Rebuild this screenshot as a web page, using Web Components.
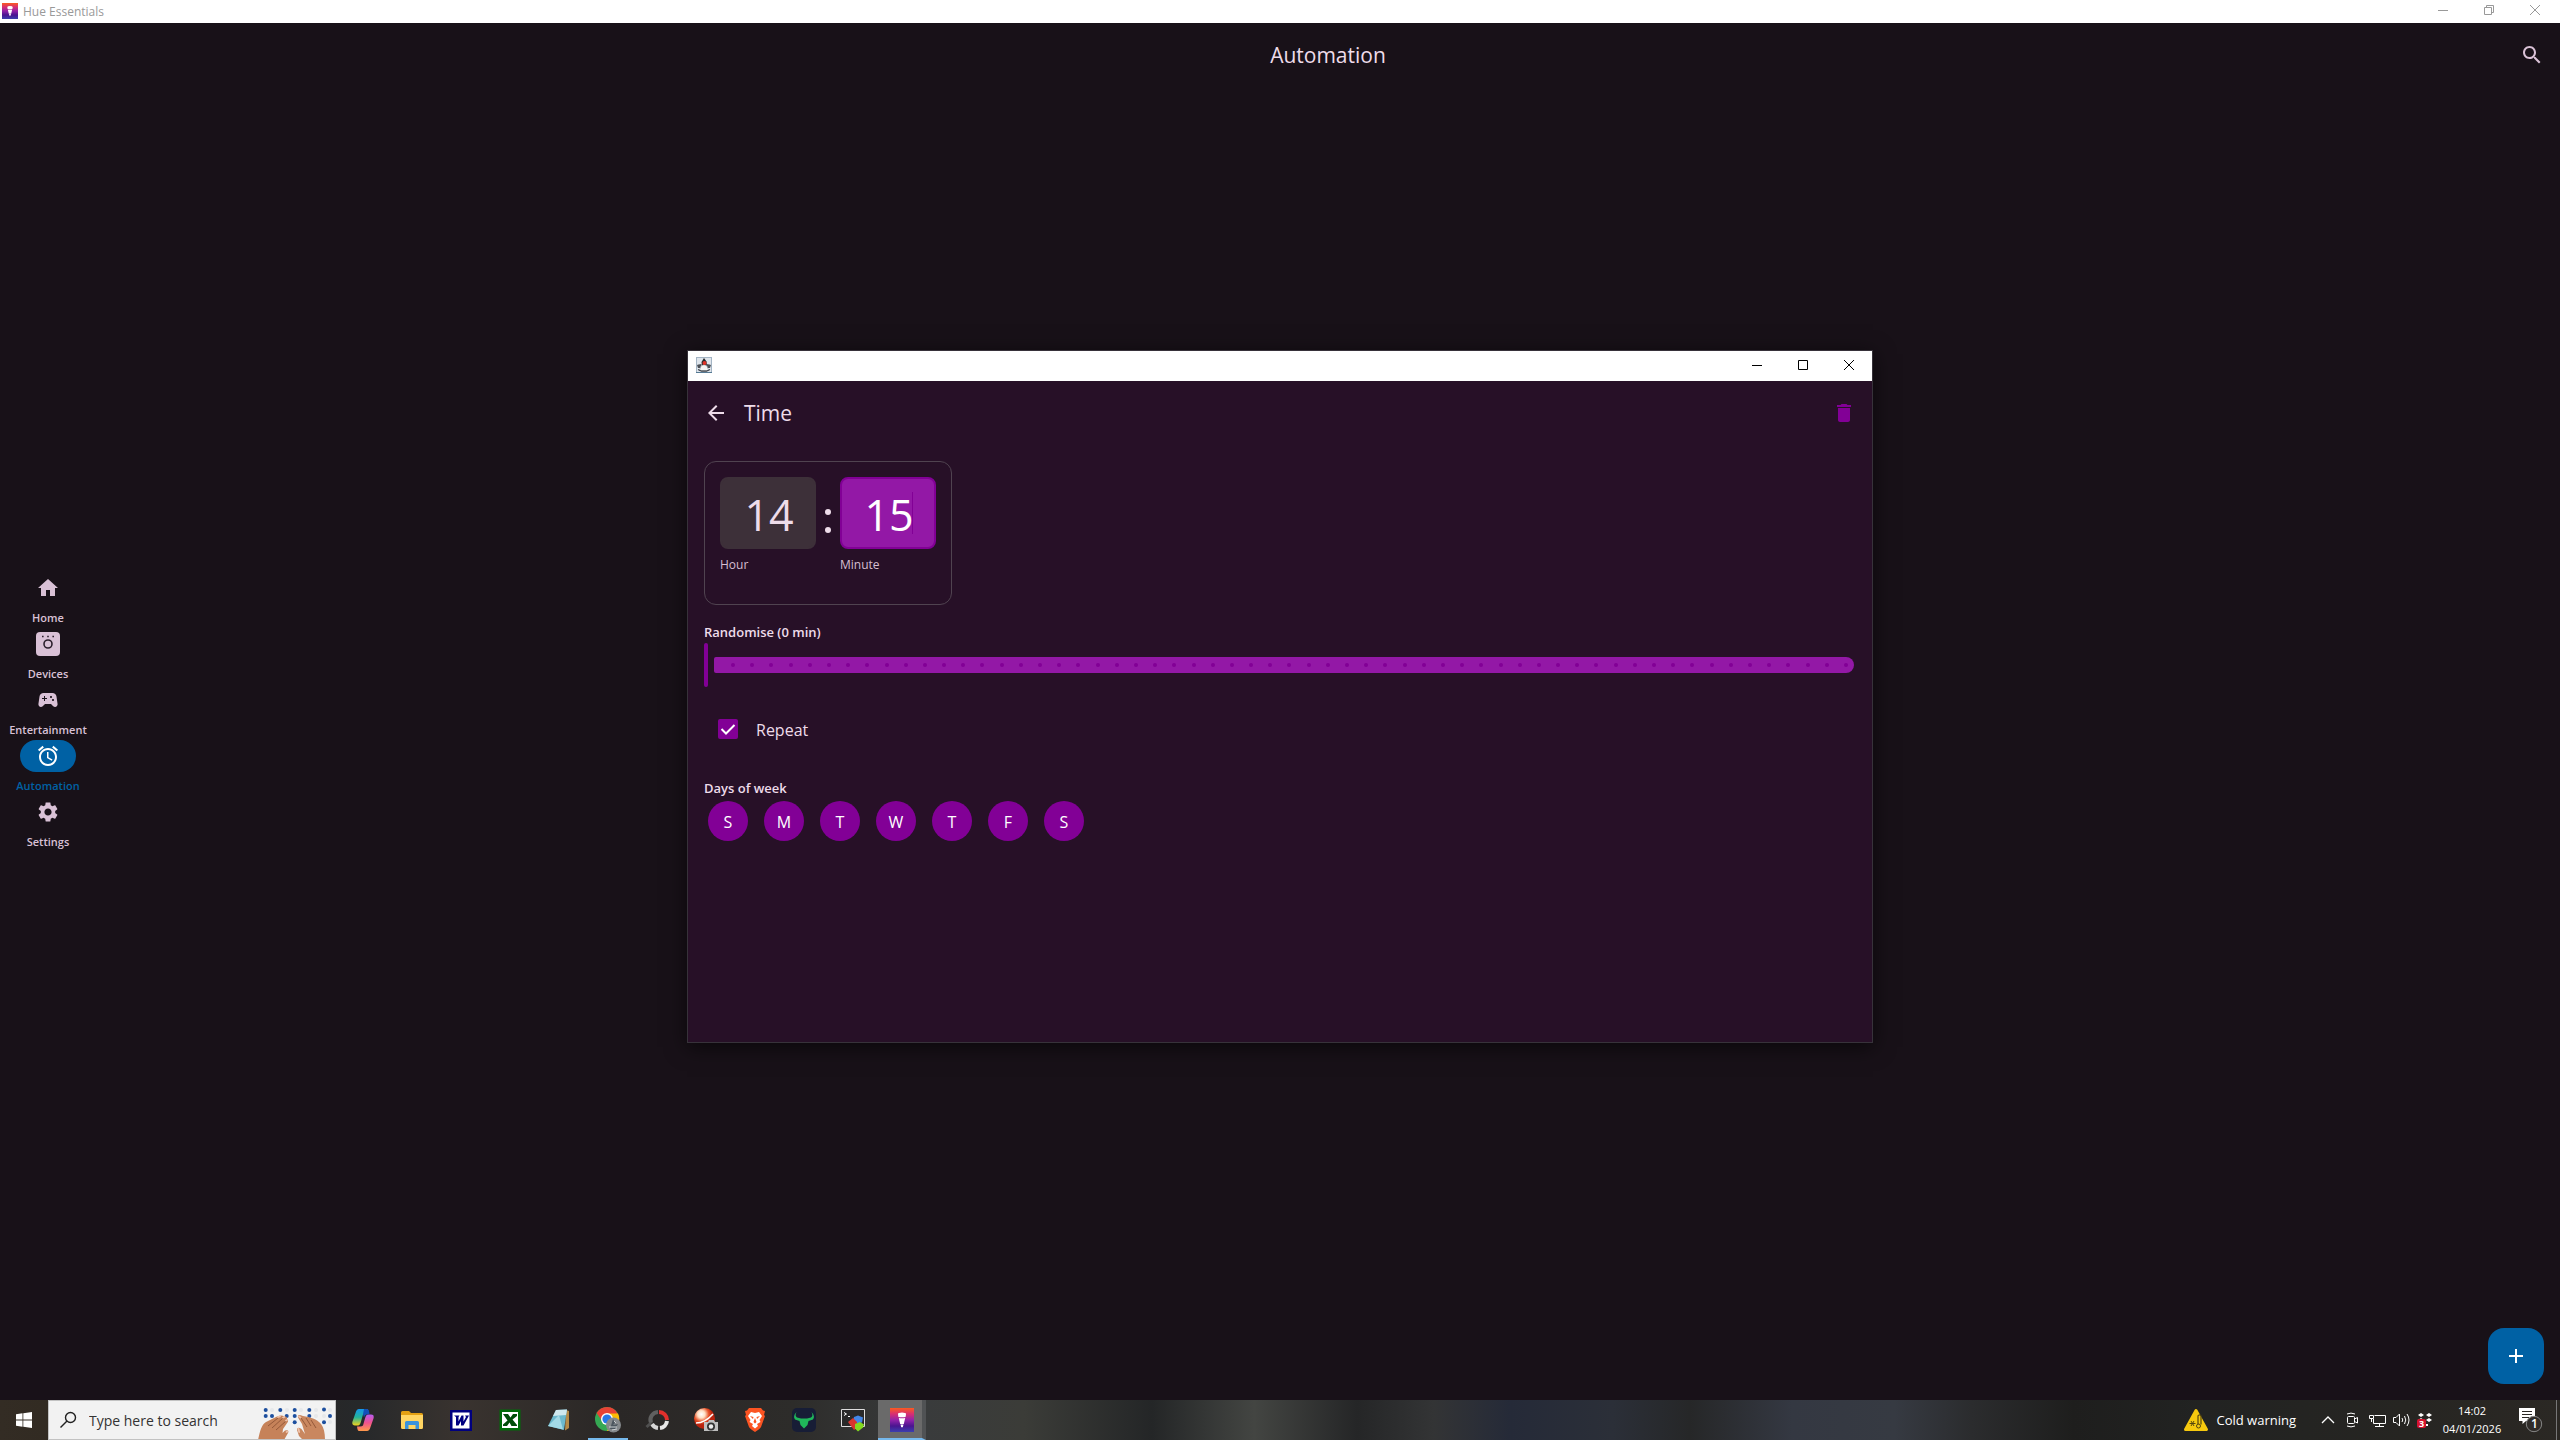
<!DOCTYPE html>
<html lang="en">
<head>
<meta charset="utf-8">
<title>Hue Essentials</title>
<style>
html, body { margin: 0; height: 100%; }
body { font-family: "Open Sans", "Noto Sans", sans-serif; font-size: 12px; background: #181118; overflow: hidden; }
</style>
</head>
<body>
<hue-desktop></hue-desktop>
<script>
const base = `
  *, *::before, *::after { box-sizing: border-box; }
  button { appearance: none; border: 0; margin: 0; padding: 0; background: none; color: inherit; font: inherit; display: flex; align-items: center; justify-content: center; flex: none; }
  svg { display: block; flex: none; }
`;
function component(name, css, html) {
  const template = document.createElement('template');
  template.innerHTML = `<style>${base}${css}</style>${html}`;
  customElements.define(name, class extends HTMLElement {
    constructor() {
      super();
      this.attachShadow({ mode: 'open' }).append(template.content.cloneNode(true));
      for (const part of this.shadowRoot.querySelectorAll('[data-attr]')) {
        part.textContent = this.getAttribute(part.dataset.attr) ?? '';
      }
    }
  });
}

const hueLogo = size => `<svg width="${size}" height="${size}" viewBox="0 0 24 24" aria-hidden="true">
  <defs><linearGradient id="hue" x1="0" y1="0" x2="0" y2="1"><stop offset="0" stop-color="#fb5a20"/><stop offset=".25" stop-color="#d82f72"/><stop offset=".5" stop-color="#9222a8"/><stop offset=".75" stop-color="#4a1590"/><stop offset="1" stop-color="#3b3fae"/></linearGradient></defs>
  <rect width="24" height="24" fill="url(#hue)"/>
  <path d="M8 6q0-1.500 4-1.500t4 1.500l-.4 3q-3.600.7-7.200 0z" fill="#fff"/><path d="M8.800 10q3.200.6 6.400 0L13.800 16h-3.600zM10.500 16.500h3l-.7 2.800h-1.600z" fill="#fff"/></svg>`;

/* ---- Window frame parts ---- */
component('window-buttons', `
  :host { display: flex; align-self: stretch; margin-left: auto; }
  :host([maximised]) { padding-bottom: 2px; }
  button { width: 46px; }
  .restored { display: none; }
  :host([maximised]) .restored { display: block; }
  :host([maximised]) .normal { display: none; }
  path { fill: none; stroke: currentColor; }
`, `
  <button aria-label="Minimise"><svg width="10" height="10"><path d="M0 5.500H10"/></svg></button>
  <button aria-label="Maximise">
    <svg class="normal" width="10" height="10"><path d="M.5.5H9.500V9.500H.5Z"/></svg>
    <svg class="restored" width="10" height="10"><path d="M.5 2.500H7.500V9.500H.5ZM2.500 2.500V.5H9.500V7.500H7.500"/></svg>
  </button>
  <button aria-label="Close"><svg width="10" height="10"><path d="M0 0L10 10M10 0L0 10"/></svg></button>
`);

component('title-bar', `
  :host { display: flex; box-sizing: border-box; align-items: center; background: #fff; color: #000; height: 30px; padding: 0 0 2px 8px; gap: 5px; flex: none; }
  :host([inactive]) { color: #999; height: 23px; padding: 0 2px 1px; }
`, `<slot></slot>`);

component('hue-logo', `:host { display: block; }`, hueLogo(16));

component('java-logo', `:host { display: block; }`, `
  <svg width="16" height="16" viewBox="0 0 16 16" aria-hidden="true">
    <rect x=".5" y=".5" width="15" height="15" fill="#dfe5ec" stroke="#a3b4c4"/>
    <path d="M0 15.500H16" stroke="#567a94"/>
    <path d="M8 1L10.500 4.500 11 9 6 9.500 5.500 5z" fill="#26282b"/>
    <path d="M1 8l1 3 3 0 .5-4-3 .5zM15 8l-1 3-3 0-.5-4 3 .5z" fill="#4a4f56"/>
    <path d="M5 9q3-2.500 6 0l1.500 4.500H3.500z" fill="#f4f4f4" stroke="#9a9fa5" stroke-width=".6"/>
    <path d="M2 12.500l3.500 1.700h5l3.500-1.700" stroke="#3c4046" stroke-width="1.200" fill="none"/>
    <circle cx="8.500" cy="6" r="2" fill="#e03226"/>
  </svg>`);

/* ---- Main application ---- */
component('nav-item', `
  :host { display: block; color: #d9c1d6; }
  a { display: flex; flex-direction: column; align-items: center; gap: 6px; height: 56px; color: inherit; text-decoration: none; font-size: 11px; font-weight: 600; line-height: 16px; }
  .pill { display: flex; align-items: center; justify-content: center; width: 56px; height: 32px; border-radius: 16px; }
  :host([active]) { color: #0061a4; }
  :host([active]) .pill { background: #0061a4; color: #fff; }
`, `<a href="#"><span class="pill"><slot></slot></span><span data-attr="label"></span></a>`);

component('nav-rail', `
  :host { display: flex; flex-direction: column; justify-content: center; width: 96px; flex: none; }
`, `
  <nav>
  <nav-item label="Home"><svg width="24" height="24" fill="currentColor"><path d="M10 20v-6h4v6h5v-8h3L12 3 2 12h3v8z"/></svg></nav-item>
  <nav-item label="Devices"><svg width="24" height="24"><rect width="24" height="24" rx="4" fill="#d9c1d6"/><circle cx="12" cy="12" r="4" fill="none" stroke="#2b1f2c" stroke-width="1.600"/><path d="M6 4.500h1.600M11.200 4.500h1.600M16.400 4.500H18" stroke="#2b1f2c" stroke-width="1.600"/></svg></nav-item>
  <nav-item label="Entertainment"><svg width="24" height="24" fill="currentColor"><path d="M21.580 16.090l-1.090-7.660C20.210 6.460 18.520 5 16.530 5H7.470C5.480 5 3.790 6.460 3.510 8.430l-1.090 7.660C2.200 17.630 3.390 19 4.940 19c.68 0 1.320-.27 1.800-.75L9 16h6l2.250 2.250c.48.48 1.130.75 1.800.75 1.560 0 2.750-1.370 2.530-2.910zM11 11H9v2H8v-2H6v-1h2V8h1v2h2v1zm4-1c-.55 0-1-.45-1-1s.45-1 1-1 1 .45 1 1-.45 1-1 1zm2 3c-.55 0-1-.45-1-1s.45-1 1-1 1 .45 1 1-.45 1-1 1z"/></svg></nav-item>
  <nav-item label="Automation" active><svg width="24" height="24" fill="currentColor"><path d="M22 5.720l-4.600-3.860-1.290 1.530 4.600 3.860L22 5.720zM7.880 3.390L6.600 1.860 2 5.710l1.290 1.530 4.590-3.850zM12.500 8H11v6l4.750 2.850.75-1.230-4-2.370V8zM12 4c-4.970 0-9 4.030-9 9s4.020 9 9 9c4.970 0 9-4.030 9-9s-4.030-9-9-9zm0 16c-3.870 0-7-3.130-7-7s3.130-7 7-7 7 3.130 7 7-3.130 7-7 7z"/></svg></nav-item>
  <nav-item label="Settings"><svg width="24" height="24" fill="currentColor"><path d="M19.140 12.940c.04-.3.06-.61.06-.94 0-.32-.02-.64-.07-.94l2.030-1.580c.18-.14.23-.41.12-.61l-1.920-3.320c-.12-.22-.37-.29-.59-.22l-2.390.96c-.5-.38-1.030-.7-1.620-.94l-.36-2.540c-.04-.24-.24-.41-.48-.41h-3.840c-.24 0-.43.17-.47.41l-.36 2.540c-.59.24-1.130.57-1.620.94l-2.390-.96c-.22-.08-.47 0-.59.22L2.740 8.870c-.12.21-.08.47.12.61l2.030 1.580c-.05.3-.09.63-.09.94s.02.64.07.94l-2.030 1.580c-.18.14-.23.41-.12.61l1.920 3.320c.12.22.37.29.59.22l2.390-.96c.5.38 1.030.7 1.620.94l.36 2.540c.05.24.24.41.48.41h3.840c.24 0 .44-.17.47-.41l.36-2.540c.59-.24 1.130-.56 1.620-.94l2.390.96c.22.08.47 0 .59-.22l1.920-3.320c.12-.22.07-.47-.12-.61l-2.010-1.580zM12 15.600c-1.980 0-3.600-1.620-3.600-3.600s1.620-3.600 3.600-3.600 3.600 1.620 3.600 3.600-1.620 3.600-3.600 3.600z"/></svg></nav-item>
  </nav>
`);

component('automation-page', `
  :host { display: flex; flex-direction: column; flex: 1; color: #eedcea; }
  header { display: grid; grid-template-columns: 1fr auto 1fr; align-items: center; height: 64px; padding: 0 16px; }
  h1 { grid-column: 2; margin: 0; font-size: 21px; font-weight: 400; line-height: 28px; }
  header button { justify-self: end; color: #d9c1d6; }
  .fab { align-self: flex-end; width: 56px; height: 56px; margin: auto 16px 16px 0; border-radius: 16px; background: #0061a4; color: #fff; }
`, `
  <header><h1>Automation</h1><button aria-label="Search"><svg width="24" height="24" fill="currentColor"><path d="M15.500 14h-.79l-.28-.27C15.410 12.590 16 11.110 16 9.500 16 5.910 13.090 3 9.500 3S3 5.910 3 9.500 5.910 16 9.500 16c1.610 0 3.090-.59 4.230-1.570l.27.28v.79l5 4.990L20.490 19l-4.990-5zm-6 0C7.010 14 5 11.990 5 9.500S7.010 5 9.500 5 14 7.010 14 9.500 11.990 14 9.500 14z"/></svg></button></header>
  <button class="fab" aria-label="Add automation"><svg width="24" height="24" fill="currentColor"><path d="M19 13h-6v6h-2v-6H5v-2h6V5h2v6h6v2z"/></svg></button>
`);

/* ---- Time dialog ---- */
component('time-picker', `
  :host { display: flex; width: fit-content; height: 144px; padding: 15px; border: 1px solid #504350; border-radius: 12px; }
  .field { position: relative; display: flex; flex-direction: column; gap: 8px; width: 96px; }
  input { appearance: none; width: 96px; height: 72px; margin: 0; padding: 3px 0 0 2px; border: 2px solid #3d3039; border-radius: 8px; outline: 0; background: #3d3039; color: #eedcea; font: 400 43px/60px "Open Sans", "Noto Sans", sans-serif; text-align: center; }
  label { color: #d5bfd2; line-height: 16px; }
  .on input { background: #9318a6; border-color: #820096; color: #fff; }
  .caret { position: absolute; left: 72px; top: 15px; width: 1px; height: 42px; background: #820096; }
  .colon { display: flex; flex-direction: column; justify-content: center; align-items: center; gap: 12px; width: 24px; height: 72px; padding-top: 15px; }
  .colon i { width: 6px; height: 6px; border-radius: 3px; background: #eedcea; }
`, `
  <div class="field"><input id="hour" value="14" inputmode="numeric"><label for="hour">Hour</label></div>
  <div class="colon"><i></i><i></i></div>
  <div class="field on"><input id="minute" value="15" inputmode="numeric"><label for="minute">Minute</label><span class="caret"></span></div>
`);

component('random-slider', `
  :host { display: block; }
  label { display: block; color: #eedcea; font-size: 13px; font-weight: 600; line-height: 20px; }
  .slider { display: grid; align-items: center; height: 44px; margin: 1px 2px 0 0; }
  .track, input { grid-area: 1 / 1; }
  .track { display: flex; justify-content: space-between; align-items: center; height: 16px; margin-left: 10px; padding: 0 6px 0 17px; border-radius: 2px 8px 8px 2px; background: #9318a6; }
  .track i { width: 4px; height: 4px; border-radius: 2px; background: #820096; }
  input { appearance: none; width: 100%; height: 44px; margin: 0; background: none; }
  input::-webkit-slider-thumb { appearance: none; width: 4px; height: 44px; border-radius: 2px; background: #820096; }
`, `
  <label for="range">Randomise (0 min)</label>
  <div class="slider"><div class="track">${'<i></i>'.repeat(59)}</div><input id="range" type="range" min="0" max="60" value="0"></div>
`);

component('repeat-option', `
  :host { display: flex; align-items: center; gap: 18px; height: 48px; padding-left: 14px; color: #eedcea; font-size: 16px; line-height: 24px; box-sizing: border-box; }
  .box { display: grid; }
  label { padding-top: 2px; }
  input, svg { grid-area: 1 / 1; }
  input { appearance: none; width: 20px; height: 20px; margin: 0; border-radius: 2px; background: #820096; }
  svg { pointer-events: none; }
`, `
  <span class="box"><input id="repeat" type="checkbox" checked><svg width="20" height="20"><path d="M3.500 10L8 14.500L16.500 6" fill="none" stroke="#fff" stroke-width="2"/></svg></span>
  <label for="repeat">Repeat</label>
`);

component('day-toggle', `
  :host { display: block; }
  button { width: 40px; height: 40px; padding-top: 1px; border-radius: 20px; background: #820096; color: #fff; font-size: 16px; line-height: 20px; }
`, `<button aria-pressed="true"><slot></slot></button>`);

component('week-days', `
  :host { display: block; color: #eedcea; }
  h2 { margin: 0; font-size: 13px; font-weight: 600; line-height: 20px; }
  .days { display: flex; gap: 16px; padding: 3px 4px; }
`, `<h2>Days of week</h2><div class="days">${['S', 'M', 'T', 'W', 'T', 'F', 'S'].map(d => `<day-toggle>${d}</day-toggle>`).join('')}</div>`);

component('time-dialog', `
  :host { display: flex; flex-direction: column; border: 1px solid #37323a; background: #271027; color: #eedcea; box-shadow: 0 4px 20px rgba(0, 0, 0, .6); }
  header { display: flex; align-items: center; gap: 16px; height: 64px; padding: 0 16px; }
  h1 { margin: 0; font-size: 21px; font-weight: 400; line-height: 28px; }
  .delete { margin-left: auto; color: #820096; }
  main { display: flex; flex-direction: column; padding: 16px; }
  random-slider { margin-top: 17px; }
  repeat-option { margin-top: 18px; }
  week-days { margin-top: 25px; }
`, `
  <title-bar><java-logo></java-logo><window-buttons></window-buttons></title-bar>
  <header>
    <button aria-label="Back"><svg width="24" height="24" fill="currentColor"><path d="M20 11H7.830l5.590-5.590L12 4l-8 8 8 8 1.410-1.410L7.830 13H20v-2z"/></svg></button>
    <h1>Time</h1>
    <button class="delete" aria-label="Delete"><svg width="24" height="24" fill="currentColor"><path d="M6 19c0 1.100.9 2 2 2h8c1.100 0 2-.9 2-2V7H6v12zM19 4h-3.500l-1-1h-5l-1 1H5v2h14V4z"/></svg></button>
  </header>
  <main><time-picker></time-picker><random-slider></random-slider><repeat-option></repeat-option><week-days></week-days></main>
`);

/* ---- Taskbar ---- */
component('task-button', `
  :host { display: flex; width: 48px; height: 40px; flex: none; }
  button { width: 100%; height: 100%; }
  :host([running]) button { background: linear-gradient(#76b9ed, #76b9ed) center bottom / 40px 2px no-repeat; }
  :host([active]) button { padding-left: 4px; padding-top: 2px; border-right: 4px solid #505254; border-bottom: 2px solid #76b9ed; background: #6a6a6a; }
`, `<button><slot></slot></button>`);

component('search-box', `
  :host { display: flex; box-sizing: border-box; align-items: center; width: 288px; height: 40px; padding-left: 10px; border: 1px solid #c2c2c2; background: #f2f2f2; color: #333; }
  input { flex: 1; min-width: 0; height: 30px; margin: 0 0 0 12px; padding: 0; border: 0; outline: 0; background: none; font: 400 14px/20px "Open Sans", "Noto Sans", sans-serif; }
  input::placeholder { color: #333; opacity: 1; }
`, `
  <svg width="18" height="18" fill="none" stroke="#222" stroke-width="1.400"><circle cx="11.500" cy="6.500" r="5"/><path d="M8 10L1.500 16.500"/></svg>
  <input type="search" aria-label="Search" placeholder="Type here to search">
  <svg width="79" height="38" viewBox="0 1 79 38" aria-hidden="true">
    <g fill="#e6e8ea"><circle cx="16" cy="10" r="2"/><circle cx="31" cy="10" r="2"/><circle cx="45" cy="10" r="2"/><circle cx="60" cy="10" r="2"/><circle cx="74" cy="10" r="2"/><circle cx="60" cy="16" r="2"/><circle cx="68" cy="16" r="2"/><circle cx="60" cy="22" r="2"/><circle cx="74" cy="22" r="2"/></g>
    <g fill="#1d4f9e"><circle cx="9.700" cy="10" r="2"/><circle cx="24.300" cy="10" r="2"/><circle cx="38.700" cy="10" r="2"/><circle cx="53.300" cy="10" r="2"/><circle cx="68" cy="9.500" r="2"/><circle cx="9.700" cy="16" r="2"/><circle cx="16" cy="16" r="2"/><circle cx="30.700" cy="16" r="2"/><circle cx="38.700" cy="16" r="2"/><circle cx="53.300" cy="16" r="2"/><circle cx="74" cy="16" r="2"/><circle cx="38.700" cy="22.300" r="2"/><circle cx="68" cy="22.300" r="2"/></g>
    <path d="M2 40C4 32 5 25 10 22L21 16.500Q26 14.500 28 16.500 31.500 16 31 19 33 20 31.500 22.500L27 29 26.500 33 29 30.500Q33.500 29.500 32 33L28 40z" fill="#c68259"/>
    <path d="M69 40C69 33 68 28 65 24C61 19 54 17 47 16Q41 13.500 42 17.500L46 24 49 34 45.500 29Q41 26 41 30L43 36 47 40z" fill="#c9875f"/>
    <path d="M12 26l10-8M16 28l11-10M20 30l10-9M45 18l6 9M50 18l5 8M55 20l5 8" fill="none" stroke="#8e5436" stroke-width=".9"/>
    <path d="M22 17l2-.7M27 17.500l1.500-.5M30 20.500l1-.5M43 16.500l1.500 1M42.500 29l.7 3M30.500 32l.8-.3" stroke="#efc2aa" stroke-width="1.800" stroke-linecap="round"/>
  </svg>
`);

component('task-clock', `
  :host { display: flex; flex-direction: column; align-items: center; width: 64px; line-height: 18px; font-size: 11px; }
`, `<span>14:02</span><span>04/01/2026</span>`);

component('task-bar', `
  :host { display: flex; align-items: center; height: 40px; color: #fff; flex: none;
    background: linear-gradient(90deg, #332c24 0%, #30291f 5%, #2a2522 10%, #26282a 14%, #39332f 18%, #2a2726 24%, #2d2c2a 31%, #393b3c 36%, #3b3c38 40%, #242627 45%, #434542 49%, #252627 53%, #333435 56%, #252a38 59%, #2b2f38 63%, #262728 66%, #343842 70%, #363a42 74%, #2b2c2e 77%, #1e1e1d 81%, #222322 86%, #262522 94%, #2b2824 100%); }
  .apps { display: flex; gap: 1px; margin-left: 3px; }
  .tray { display: flex; align-items: center; margin-left: auto; }
  .weather { gap: 8px; font-size: 13px; line-height: 20px; margin-right: 25px; }
  .icons { display: flex; align-items: center; gap: 7px; margin-right: 7px; }
  .tray svg { overflow: visible; }
  .note { margin-left: 14px; }
  .peek { width: 4px; height: 40px; margin-left: 12px; border-left: 1px solid #777; }
  .tray path.l, .tray g.l { fill: none; stroke: #fff; }
  .count { font-size: 9px; font-weight: 700; }
  .badge { font-size: 12px; font-weight: 600; }
`, `
  <task-button><svg width="16" height="16" fill="#fff"><path d="M0 2.200L6.500 1.300V7.500H0zM7.300 1.200L16 0V7.500H7.300zM0 8.500H6.500V14.700L0 13.800zM7.300 8.500H16V16L7.300 14.800z"/></svg></task-button>
  <search-box></search-box>
  <div class="apps">
    <task-button><svg width="22" height="22"><defs><linearGradient id="a" x1="0" y1="0" x2="0" y2="1"><stop offset="0" stop-color="#1596ea"/><stop offset=".5" stop-color="#23b39a"/><stop offset="1" stop-color="#f2d21b"/></linearGradient><linearGradient id="b" x1="0" y1="0" x2="0" y2="1"><stop offset="0" stop-color="#b65cf0"/><stop offset=".5" stop-color="#f0528d"/><stop offset="1" stop-color="#ff9a4a"/></linearGradient></defs><path d="M15 0H7Q4.500 0 3.500 4L.5 12.500Q-.5 16.500 3 16.500H6Q8 16.500 9 12.500L11 5.500Q12 4.500 14 4.500H17Q16.500 0 15 0z" fill="url(#a)"/><path d="M7 22h8q2.500 0 3.500-4l3-8.500q1-4-2.500-4h-3q-2 0-3 4L11 16.500Q10 17.500 8 17.500H5Q5.500 22 7 22z" fill="url(#b)"/><path d="M12 0h3q2 0 2.500 5l-3 .5q-2 .5-2.500 3L11 5z" fill="#1250b8"/></svg></task-button>
    <task-button><svg width="22" height="18"><path d="M0 1.500Q0 0 1.500 0H8L10 2H20.500Q22 2 22 3.500V16Q22 18 20.500 18H1.500Q0 18 0 16z" fill="#e3a013"/><path d="M0 4H22V16Q22 18 20.500 18H1.500Q0 18 0 16z" fill="#ffd563"/><path d="M4 18V11.500Q4 10 5.500 10H16.500Q18 10 18 11.500V18H14.500V14H7.500V18z" fill="#3a93dc"/></svg></task-button>
    <task-button><svg width="22" height="21"><path d="M0 0H22V21H0z" fill="#000080"/><path d="M2.500 2.500H19.500V18.500H2.500z" fill="#fff"/><path d="M4 5.500H9.500L8.500 7V11.500L11.500 5.500H13.500V11.500L16 7 15 5.500H19L13.500 15.500H11V11L8.500 15.500H6V7z" fill="#000080"/></svg></task-button>
    <task-button><svg width="22" height="22"><path d="M.5.5H21.500V21.500H.5z" fill="#006c08"/><path d="M3 3H19V19H3z" fill="#fff"/><path d="M4 5H9L11.500 8.500 14 5H18V7L13.500 10.500 18 16V17H12.500L10.500 13.500 8 17H4V15.500L8.500 11.500z" fill="#004d08"/></svg></task-button>
    <task-button><svg width="24" height="24"><path d="M19 2l3 1v17l-4 2.500z" fill="#b58a47"/><path d="M9 2L20 1.500 17 22 1 18z" fill="#6db9cd"/><path d="M9 2L20 1.500 19 7 6 8z" fill="#cfe8ee"/><path d="M12 7L1 18l15 3.500z" fill="#a3dae7"/></svg></task-button>
    <task-button running><svg width="26" height="26"><circle cx="12" cy="12" r="12" fill="#35a853"/><path d="M12 0A12 12 0 0 1 23 7.500L12 7 7 14 1.600 6A12 12 0 0 1 12 0z" fill="#e84235"/><path d="M12 6.500H23A12 12 0 0 1 12 24L17 14z" fill="#fbbc04"/><circle cx="12" cy="12" r="6" fill="#fff"/><circle cx="12" cy="12" r="4.600" fill="#2878e8"/><circle cx="18.500" cy="18" r="7.500" fill="#85898c"/><path d="M18 12l2 4-2 2 5-1-3 5h-5z" fill="#4c565f"/><path d="M14 20h8M17 23l5-1M19 14l2 2" stroke="#cbd0d3"/></svg></task-button>
    <task-button><svg width="24" height="24" fill="none" stroke-width="4"><path d="M14 4A8 8 0 0 1 22 12" stroke="#e1302c"/><path d="M22 13A8 8 0 0 1 15 20" stroke="#e8e8e8"/><path d="M13 20A8 8 0 0 1 7 16" stroke="#d6d6d6"/><path d="M6 15A8 8 0 0 1 13 4" stroke="#606060"/><path d="M6 15L1.500 19" stroke="#505050" stroke-width="3"/></svg></task-button>
    <task-button><svg width="24" height="24"><defs><radialGradient id="o" cx=".35" cy=".3"><stop offset="0" stop-color="#fff"/><stop offset=".35" stop-color="#ffe0c4"/><stop offset=".7" stop-color="#e8542a"/><stop offset="1" stop-color="#b8230e"/></radialGradient></defs><circle cx="10.500" cy="10.500" r="10.500" fill="url(#o)"/><path d="M2 15q9 0 17-9" stroke="#fff" stroke-width="1.500" fill="none"/><path d="M10 14h4l1-2h5l1 2h3v9H10z" fill="#bfbfbf"/><circle cx="17" cy="18.500" r="4" fill="#333"/><circle cx="17" cy="18.500" r="2.200" fill="#eee"/></svg></task-button>
    <task-button><svg width="22" height="24"><path d="M5 0H17L19 2.500 21 3 20 7 21 8 17 19Q16 21 11 24 6 21 5 19L1 8 2 7 1 3 3 2.500z" fill="#fb5422"/><path d="M7 4L11 5 15 4 18 8 15.500 12 16.500 14 13 16 14 18 11 20.500 8 18 9 16 5.500 14 6.500 12 4 8z" fill="#fff"/><path d="M6 8l3.500 1-.5 2zM16 8l-3.500 1 .5 2zM11 10l1.500 4-1.500 1.500L9.500 14zM9 17h4" fill="#fb5422"/></svg></task-button>
    <task-button><svg width="24" height="24"><rect width="24" height="24" rx="5" fill="#171d36"/><path d="M4.500 4Q2.500 8 5 9.500L9 10.500H15L19 9.500Q21.500 8 19.500 4 23.500 8 21 11.500L16.500 13 15.500 17 12 20.500 8.500 17 7.500 13 3 11.500Q.5 8 4.500 4z" fill="#20b65a"/></svg></task-button>
    <task-button><svg width="24" height="24"><path d="M.5 1.500H23.500V18.500H.5z" fill="#292929" stroke="#ddd"/><path d="M3 4.500l2.500 1.500L3 7.500M7 8.500h2" fill="none" stroke="#fff"/><path d="M13 9l4-1.500 5 2-1 5-5 1-4-3z" fill="#4387e8"/><path d="M7 14l5-4 4 4 0 6-3 2z" fill="#d8352f"/><path d="M14 16l5-2 4 2.500-1 3-5 4-3-3z" fill="#83da20"/></svg></task-button>
    <task-button active>${hueLogo(24)}</task-button>
  </div>
  <div class="tray">
    <button class="weather"><svg width="24" height="22"><path d="M12 1.500L22.500 20.500H1.500z" fill="#f6c90e" stroke="#f6c90e" stroke-width="3" stroke-linejoin="round"/><g fill="none" stroke="#54460e"><path d="M5.500 14.500h6M7 12l3 5M10 12l-3 5"/><path d="M14 15.500V8a1.500 1.500 0 0 1 3-1V15.500" stroke-width="1.200"/><circle cx="14.500" cy="17" r="2"/></g></svg><span>Cold warning</span></button>
    <div class="icons">
      <svg width="14" height="8"><path class="l" d="M1 7L7 1L13 7" stroke-width="1.300"/></svg>
      <svg width="20" height="16" viewBox="2 0 20 16"><g class="l"><rect x="7.500" y="4.500" width="7" height="7" rx="1"/><path d="M14.500 7L17.500 5.500V11L14.500 9.500M7 2Q11 .2 15 2M7 14Q11 15.800 15 14"/></g></svg>
      <svg width="17" height="16"><g class="l"><path d="M5.500 3.500H16.500V11.500H4.500V7M10.500 11.500V14.500M6 14.500H15M.5 3.500H4.500V6.500H.5zM2.500 6.500V10"/></g></svg>
      <svg width="17" height="16"><g class="l"><path d="M.5 5.500H3L6.500 2V14L3 10.500H.5zM9 6Q10.500 8 9 10M11.500 4Q14 8 11.500 12M14 2Q18 8 14 14"/></g></svg>
      <svg width="16" height="16"><path d="M1 3l3-2 3 2-3 2zM9 3l3-2 3 2-3 2zM9 8l3-2 3 2-3 2zM1 8l3-2 3 2-3 2zM8 12h3v2H8z" fill="#fff"/><rect y="7" width="9" height="9" rx="2" fill="#d5122e"/><text class="count" x="2" y="15" fill="#fff">3</text></svg>
    </div>
    <task-clock></task-clock>
    <button class="note" aria-label="Notifications"><svg width="26" height="28"><path d="M1 2H17V15H8L4.500 18V15H1z" fill="#fff"/><path d="M4 5.500H14M4 8.500H14M4 11.500H11" stroke="#2a2724"/><circle cx="16" cy="18" r="7.700" fill="#2f2c29" stroke="#858585"/><text class="badge" x="13" y="22" fill="#fff">1</text></svg></button>
    <span class="peek"></span>
  </div>
`);

/* ---- Desktop ---- */
component('hue-desktop', `
  :host { display: flex; flex-direction: column; height: 100vh; position: relative; background: #181118; }
  .app { display: flex; flex: 1; min-height: 0; }
  time-dialog { position: absolute; left: 0; right: 0; top: 350px; width: 1186px; height: 693px; margin: 0 auto; }
`, `
  <title-bar inactive><hue-logo></hue-logo><span>Hue Essentials</span><window-buttons maximised></window-buttons></title-bar>
  <div class="app"><nav-rail></nav-rail><automation-page></automation-page></div>
  <task-bar></task-bar>
  <time-dialog></time-dialog>
`);
</script>
</body>
</html>
